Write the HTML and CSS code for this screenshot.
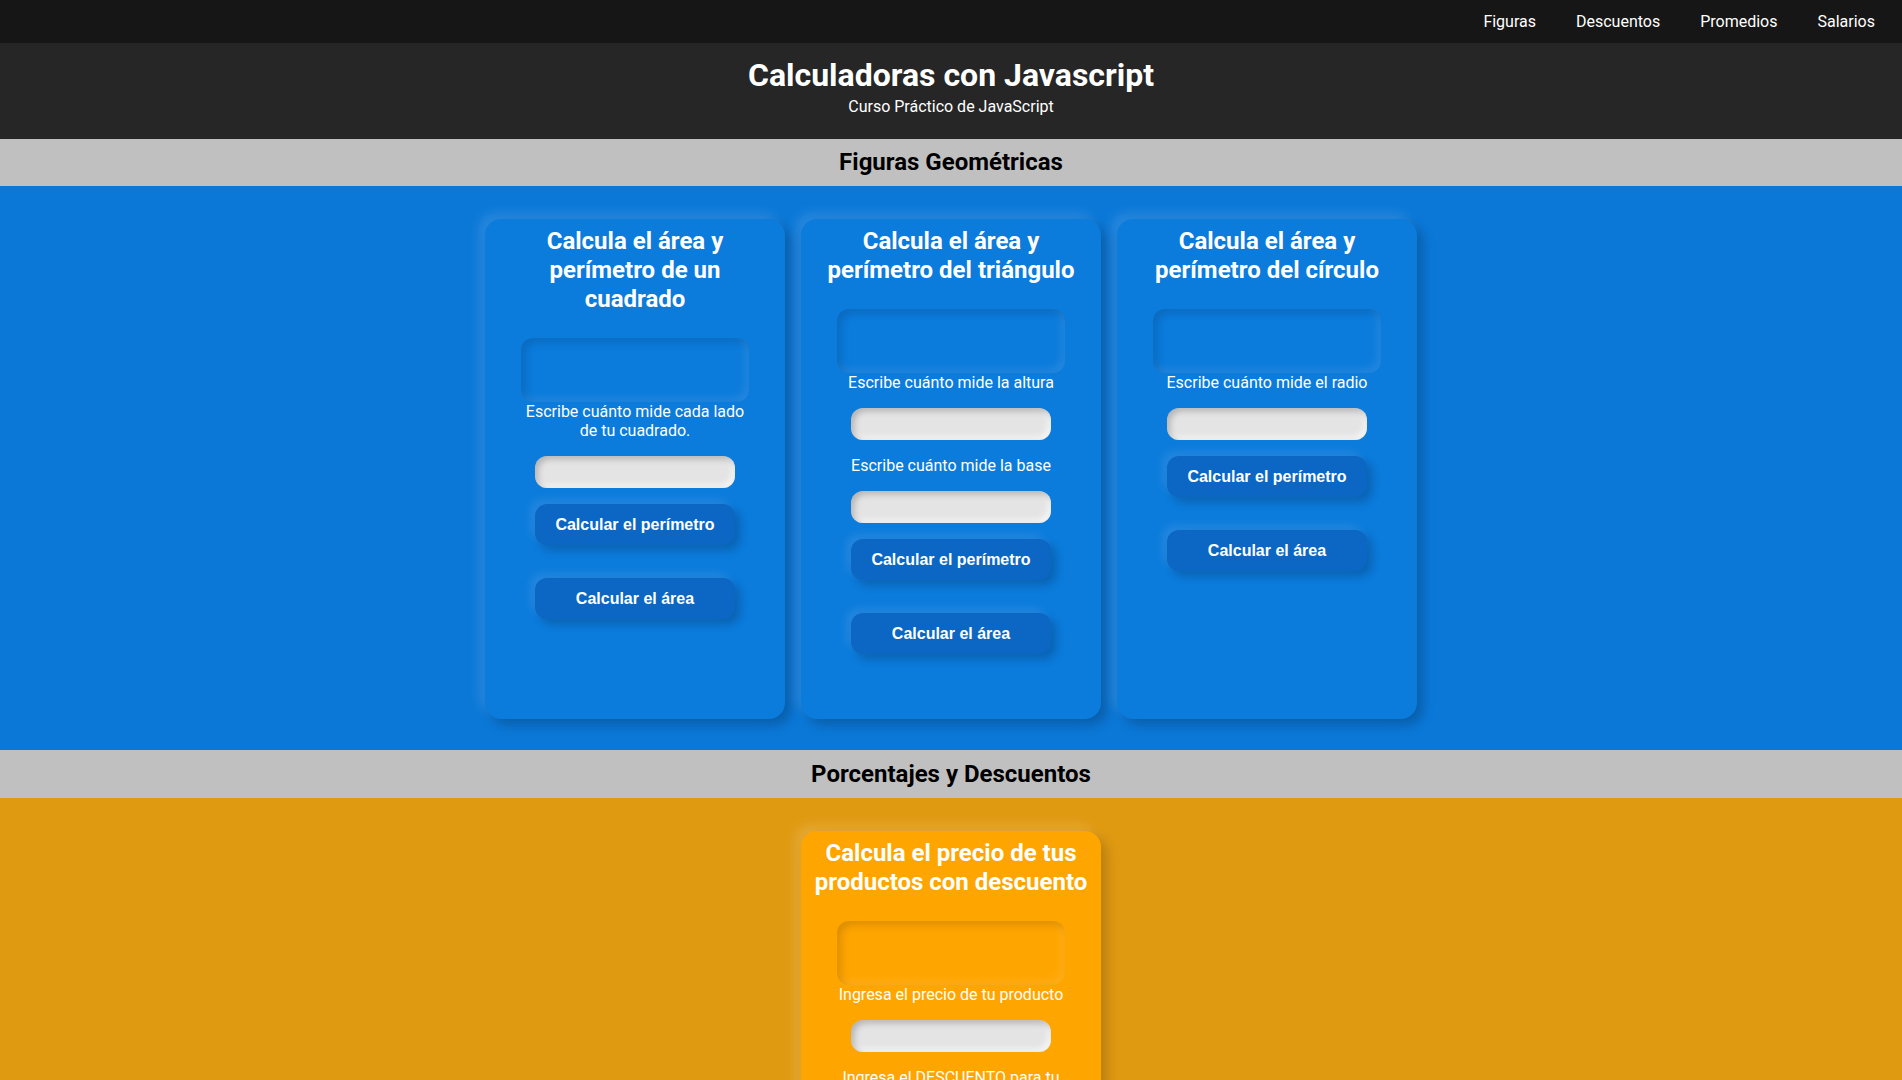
FILE: index.html
```html
<!DOCTYPE html>
<html lang="es">
<head>
<meta charset="utf-8">
<title>Calculadoras con Javascript</title>
<link rel="stylesheet" href="styles.css">
</head>
<body>
<nav class="topnav">
  <a href="#figuras">Figuras</a>
  <a href="#descuentos">Descuentos</a>
  <a href="#promedios">Promedios</a>
  <a href="#salarios">Salarios</a>
</nav>
<header class="hero">
  <h1>Calculadoras con Javascript</h1>
  <p>Curso Práctico de JavaScript</p>
</header>

<h2 class="section-title" id="figuras">Figuras Geométricas</h2>
<section class="section section-blue">
  <div class="card card-blue">
    <h3>Calcula el área y perímetro de un cuadrado</h3>
    <div class="result"></div>
    <label class="label">Escribe cuánto mide cada lado de tu cuadrado.</label>
    <input class="field" type="number">
    <button class="btn">Calcular el perímetro</button>
    <button class="btn btn-second">Calcular el área</button>
  </div>
  <div class="card card-blue">
    <h3>Calcula el área y perímetro del triángulo</h3>
    <div class="result"></div>
    <label class="label">Escribe cuánto mide la altura</label>
    <input class="field" type="number">
    <label class="label">Escribe cuánto mide la base</label>
    <input class="field" type="number">
    <button class="btn">Calcular el perímetro</button>
    <button class="btn btn-second">Calcular el área</button>
  </div>
  <div class="card card-blue">
    <h3>Calcula el área y perímetro del círculo</h3>
    <div class="result"></div>
    <label class="label">Escribe cuánto mide el radio</label>
    <input class="field" type="number">
    <button class="btn">Calcular el perímetro</button>
    <button class="btn btn-second">Calcular el área</button>
  </div>
</section>

<h2 class="section-title" id="descuentos">Porcentajes y Descuentos</h2>
<section class="section section-orange">
  <div class="card card-orange">
    <h3>Calcula el precio de tus productos con descuento</h3>
    <div class="result"></div>
    <label class="label">Ingresa el precio de tu producto</label>
    <input class="field" type="number">
    <label class="label">Ingresa el DESCUENTO para tu producto</label>
    <input class="field" type="number">
    <button class="btn btn-orange">Calcular el precio con descuento</button>
  </div>
</section>
</body>
</html>
```

FILE: styles.css
```css
* { box-sizing: border-box; }

body {
  margin: 0;
  font-family: Roboto, "Liberation Sans", Arial, sans-serif;
  background: #e09a12;
  color: #fff;
}

.topnav {
  height: 43px;
  background: #161616;
  display: flex;
  justify-content: flex-end;
  align-items: center;
  gap: 40px;
  padding-right: 27px;
}

.topnav a {
  color: #fff;
  text-decoration: none;
  font-size: 16px;
  line-height: 19px;
}

.hero {
  height: 96px;
  background: #262626;
  text-align: center;
  padding-top: 13px;
}

.hero h1 {
  margin: 0;
  font-size: 32px;
  line-height: 38px;
  font-weight: 700;
}

.hero p {
  margin: 3px 0 0;
  font-size: 16px;
  line-height: 19px;
}

.section-title {
  margin: 0;
  height: 47px;
  line-height: 47px;
  background: #c0c0c0;
  color: #000;
  text-align: center;
  font-size: 24px;
  font-weight: 700;
}

#descuentos { height: 48px; line-height: 48px; }

.section {
  display: flex;
  justify-content: center;
  gap: 16px;
  padding: 33px 0 31px;
}

.section-blue { background: #0b78d8; }
.section-orange { background: #e09a12; }

.card {
  width: 300px;
  height: 500px;
  padding: 8px 12px;
  border-radius: 16px;
  display: flex;
  flex-direction: column;
  align-items: center;
}

.card-blue {
  background: #0b7bdc;
  box-shadow: 6px 6px 12px rgba(0, 0, 0, 0.22), -6px -6px 12px rgba(255, 255, 255, 0.12);
}

.card-orange {
  background: #ffa500;
  box-shadow: 6px 6px 12px rgba(0, 0, 0, 0.18), -6px -6px 12px rgba(255, 255, 255, 0.15);
}

.card h3 {
  margin: 0;
  width: 276px;
  font-size: 24px;
  line-height: 29px;
  font-weight: 700;
  text-align: center;
}

.result {
  width: 228px;
  height: 64px;
  margin-top: 24px;
  border-radius: 12px;
  flex-shrink: 0;
  box-shadow: inset 4px 4px 8px rgba(0, 0, 0, 0.14), inset -4px -4px 8px rgba(255, 255, 255, 0.1);
}

.label {
  display: block;
  max-width: 228px;
  font-size: 16px;
  line-height: 19px;
  text-align: center;
}

.field {
  display: block;
  width: 200px;
  height: 32px;
  margin: 16px 0;
  border: none;
  border-radius: 12px;
  background: #e4e4e4;
  box-shadow: inset 3px 3px 6px rgba(0, 0, 0, 0.22), inset -3px -3px 6px rgba(255, 255, 255, 0.7);
  flex-shrink: 0;
}

.btn {
  width: 200px;
  height: 41px;
  flex-shrink: 0;
  border: none;
  border-radius: 12px;
  background: #0b67c3;
  color: #fff;
  font-family: "Liberation Sans", Arial, sans-serif;
  font-size: 16px;
  font-weight: 700;
  box-shadow: 5px 5px 10px rgba(0, 0, 0, 0.2), -5px -5px 10px rgba(255, 255, 255, 0.1);
}

.btn-second { margin-top: 33px; }

.btn-orange { background: #d98c00; }
```
